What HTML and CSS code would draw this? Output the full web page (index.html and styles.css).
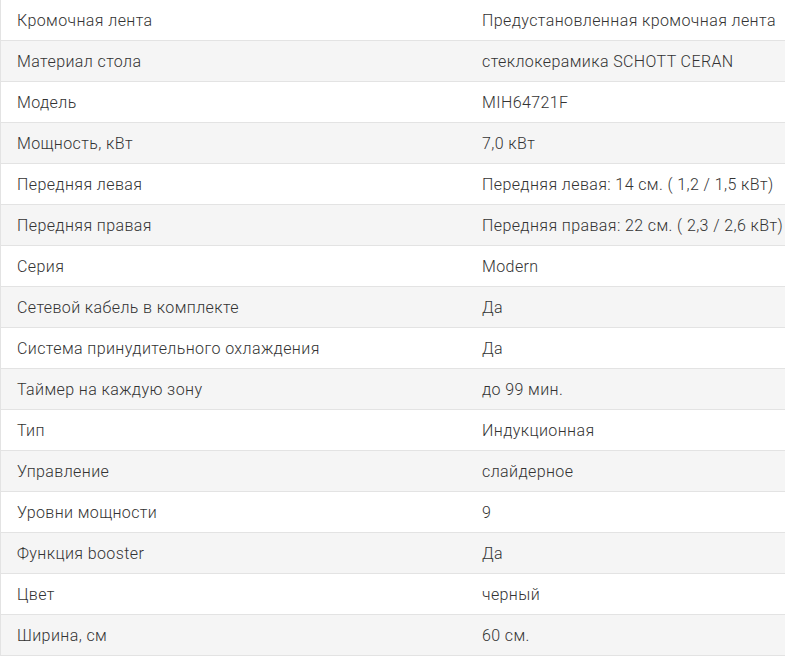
FILE: index.html
```html
<!DOCTYPE html>
<html lang="ru">
<head>
<meta charset="utf-8">
<link rel="stylesheet" href="styles.css">
</head>
<body>
<table class="specs">
<tbody>
<tr><td class="name">Кромочная лента</td><td class="val">Предустановленная кромочная лента</td></tr>
<tr><td class="name">Материал стола</td><td class="val">стеклокерамика SCHOTT CERAN</td></tr>
<tr><td class="name">Модель</td><td class="val">MIH64721F</td></tr>
<tr><td class="name">Мощность, кВт</td><td class="val">7,0 кВт</td></tr>
<tr><td class="name">Передняя левая</td><td class="val">Передняя левая: 14 см. ( 1,2 / 1,5 кВт)</td></tr>
<tr><td class="name">Передняя правая</td><td class="val">Передняя правая: 22 см. ( 2,3 / 2,6 кВт)</td></tr>
<tr><td class="name">Серия</td><td class="val">Modern</td></tr>
<tr><td class="name">Сетевой кабель в комплекте</td><td class="val">Да</td></tr>
<tr><td class="name">Система принудительного охлаждения</td><td class="val">Да</td></tr>
<tr><td class="name">Таймер на каждую зону</td><td class="val">до 99 мин.</td></tr>
<tr><td class="name">Тип</td><td class="val">Индукционная</td></tr>
<tr><td class="name">Управление</td><td class="val">слайдерное</td></tr>
<tr><td class="name">Уровни мощности</td><td class="val">9</td></tr>
<tr><td class="name">Функция booster</td><td class="val">Да</td></tr>
<tr><td class="name">Цвет</td><td class="val">черный</td></tr>
<tr><td class="name">Ширина, см</td><td class="val">60 см.</td></tr>
</tbody>
</table>
</body>
</html>
```
FILE: styles.css
```css
html, body {
  margin: 0;
  padding: 0;
  background: #fff;
  overflow: hidden;
}
.specs {
  border-collapse: separate;
  border-spacing: 0;
  width: 785px;
  font-family: Roboto, "Liberation Sans", sans-serif;
  font-size: 16px;
  font-weight: 300;
  letter-spacing: 0.4px;
  color: #333;
  table-layout: fixed;
}
.specs td {
  height: 40px;
  padding: 0 0 0 16px;
  border-bottom: 1px solid #e3e3e3;
  vertical-align: middle;
  white-space: nowrap;
  overflow: hidden;
}
.specs td.name {
  width: 449px;
  border-left: 1px solid #e3e3e3;
}
.specs tr:nth-child(even) td {
  background: #f5f5f5;
}
```
